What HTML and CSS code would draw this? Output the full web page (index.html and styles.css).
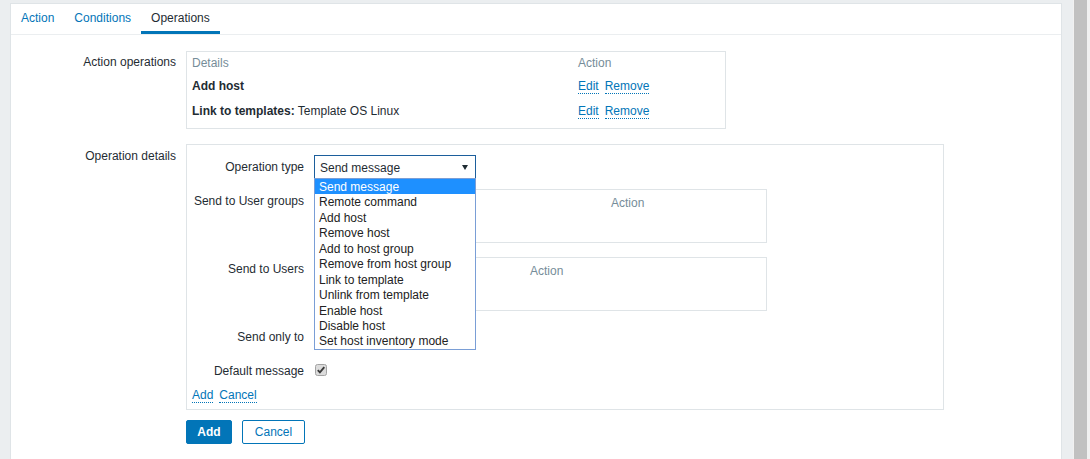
FILE: index.html
```html
<!DOCTYPE html>
<html lang="en">
<head>
<meta charset="utf-8">
<title>Action operations</title>
<link rel="stylesheet" href="styles.css">
</head>
<body>
<div class="screen">
  <div class="page">
    <div class="panel">
      <nav class="tabs">
        <a class="tab" href="#">Action</a>
        <a class="tab" href="#">Conditions</a>
        <a class="tab active" href="#">Operations</a>
      </nav>
      <div class="form">
        <div class="row row-ops">
          <div class="row-label">Action operations</div>
          <div class="ops">
            <div class="ops-grid">
              <div class="th">Details</div>
              <div class="th">Action</div>
              <div class="td"><b>Add host</b></div>
              <div class="td"><a class="link gap" href="#">Edit</a><a class="link" href="#">Remove</a></div>
              <div class="td"><b>Link to templates:</b> Template OS Linux</div>
              <div class="td"><a class="link gap" href="#">Edit</a><a class="link" href="#">Remove</a></div>
            </div>
          </div>
        </div>
        <div class="row row-details">
          <div class="row-label">Operation details</div>
          <div class="details">
            <div class="drow">
              <div class="dlabel">Operation type</div>
              <div class="select">
                <span class="select-text">Send message</span>
                <span class="arrow"></span>
                <ul class="dropdown">
                  <li class="selected">Send message</li>
                  <li>Remote command</li>
                  <li>Add host</li>
                  <li>Remove host</li>
                  <li>Add to host group</li>
                  <li>Remove from host group</li>
                  <li>Link to template</li>
                  <li>Unlink from template</li>
                  <li>Enable host</li>
                  <li>Disable host</li>
                  <li>Set host inventory mode</li>
                </ul>
              </div>
            </div>
            <div class="drow drow-table">
              <div class="dlabel">Send to User groups</div>
              <div class="utable utable-groups">
                <div class="th"></div>
                <div class="th">Action</div>
              </div>
            </div>
            <div class="drow drow-table">
              <div class="dlabel">Send to Users</div>
              <div class="utable utable-users">
                <div class="th"></div>
                <div class="th">Action</div>
              </div>
            </div>
            <div class="drow">
              <div class="dlabel">Send only to</div>
              <div class="select select-small"></div>
            </div>
            <div class="drow drow-check">
              <div class="dlabel">Default message</div>
              <div class="check">
                <svg width="12" height="12" viewBox="0 0 12 12">
                  <rect x="0.5" y="0.5" width="11" height="11" rx="2" fill="#dcdcdc" stroke="#a3a3a3"/>
                  <path d="M2.8 6.2 L4.9 8.4 L9.3 3.2" fill="none" stroke="#3a3a3a" stroke-width="1.9"/>
                </svg>
              </div>
            </div>
            <div class="drow drow-links">
              <a class="link gap" href="#">Add</a><a class="link" href="#">Cancel</a>
            </div>
          </div>
        </div>
        <div class="buttons">
          <button class="btn btn-primary" type="button">Add</button>
          <button class="btn btn-alt" type="button">Cancel</button>
        </div>
      </div>
    </div>
  </div>
  <div class="scrollbar"><div class="thumb"></div></div>
</div>
</body>
</html>
```

FILE: styles.css
```css
html, body {
  margin: 0;
  padding: 0;
  overflow: hidden;
}

body {
  font-family: "Liberation Sans", Arial, sans-serif;
  font-size: 12px;
  line-height: 14px;
  color: #1f2c33;
}

.screen {
  display: flex;
  height: 459px;
}

.page {
  flex: 1;
  background: #ebeef0;
  padding: 3px 11px 0 10px;
}

.panel {
  background: #fff;
  border: 1px solid #dfe4e7;
  border-bottom: 0;
  height: 100%;
  box-sizing: border-box;
}

.scrollbar {
  width: 17px;
  background: #f1f1f1;
  display: flex;
}

.thumb {
  flex: 1;
  margin: 0 3px 0 1px;
  background: #c1c1c1;
}

/* Tabs */
.tabs {
  display: flex;
  border-bottom: 1px solid #ebeef0;
}

.tab {
  padding: 2px 10px 0;
  line-height: 25px;
  border-bottom: 3px solid transparent;
  color: #0275b8;
  text-decoration: none;
}

.tab.active {
  color: #1f2c33;
  border-bottom-color: #0275b8;
}

/* Form */
.form {
  padding-top: 16px;
}

.row {
  display: flex;
  align-items: flex-start;
}

.row-ops {
  margin-bottom: 15px;
}

.row-label {
  width: 165px;
  margin-right: 10px;
  padding-top: 4px;
  text-align: right;
  flex-shrink: 0;
}

.row-details .row-label {
  padding-top: 5px;
}

.th {
  color: #768d99;
}

.link {
  color: #0275b8;
  text-decoration: none;
  border-bottom: 1px dotted #0275b8;
}

.link.gap {
  margin-right: 6px;
}

/* Action operations table */
.ops {
  width: 540px;
  box-sizing: border-box;
  border: 1px solid #dfe4e7;
  padding: 0 5px 4px;
}

.ops-grid {
  display: grid;
  grid-template-columns: 386px 1fr;
}

.ops-grid .th {
  padding: 4px 0;
}

.ops-grid .td {
  padding: 5px 0 6px;
}

/* Operation details */
.details {
  width: 758px;
  box-sizing: border-box;
  border: 1px solid #dfe4e7;
  padding: 10px 5px 6px;
}

.drow {
  display: flex;
  align-items: flex-start;
  margin-bottom: 10px;
}

.drow-table {
  margin-bottom: 14px;
}

.drow-check {
  margin-bottom: 10px;
}

.drow-links {
  margin-bottom: 0;
  height: 15px;
}

.dlabel {
  width: 112px;
  margin-right: 10px;
  padding-top: 5px;
  text-align: right;
  flex-shrink: 0;
  white-space: nowrap;
}

.select {
  position: relative;
  width: 162px;
  height: 24px;
  box-sizing: border-box;
  border: 1px solid #1c5e9c;
  background: #fff;
  display: flex;
  align-items: center;
  justify-content: space-between;
  padding: 0 7px 0 5px;
}

.select-text {
  padding-top: 1px;
}

.select-small {
  width: 100px;
  border-color: #cfd6da;
}

.arrow {
  width: 0;
  height: 0;
  border-left: 3px solid transparent;
  border-right: 3px solid transparent;
  border-top: 5px solid #1f2c33;
}

.dropdown {
  position: absolute;
  top: 22px;
  left: -1px;
  width: 162px;
  box-sizing: border-box;
  margin: 0;
  padding: 0;
  list-style: none;
  background: #fff;
  border: 1px solid #7a9ed6;
  z-index: 10;
}

.dropdown li {
  height: 15.45px;
  box-sizing: border-box;
  padding: 1px 0 0 4px;
  line-height: 15px;
  color: #222;
  white-space: nowrap;
}

.dropdown li.selected {
  background: #1e90ff;
  color: #fff;
}

.utable {
  width: 453px;
  height: 54px;
  box-sizing: border-box;
  border: 1px solid #dfe4e7;
  padding: 6px 5px 0;
  display: grid;
  align-content: start;
}

.utable-groups {
  grid-template-columns: 291px 1fr;
}

.utable-users {
  grid-template-columns: 210px 1fr;
}

.check {
  padding: 5px 0 0 1px;
  height: 13px;
}

.check svg {
  display: block;
}

/* Buttons */
.buttons {
  display: flex;
  margin: 10px 0 0 175px;
}

.btn {
  height: 24px;
  box-sizing: border-box;
  border-radius: 2px;
  border: 1px solid #0275b8;
  font-family: "Liberation Sans", Arial, sans-serif;
  font-size: 12px;
  line-height: 22px;
  padding: 0;
  cursor: pointer;
}

.btn-primary {
  width: 46px;
  background: #0275b8;
  color: #fff;
  font-weight: bold;
}

.btn-alt {
  width: 63px;
  margin-left: 10px;
  background: #fff;
  color: #0275b8;
}
```
